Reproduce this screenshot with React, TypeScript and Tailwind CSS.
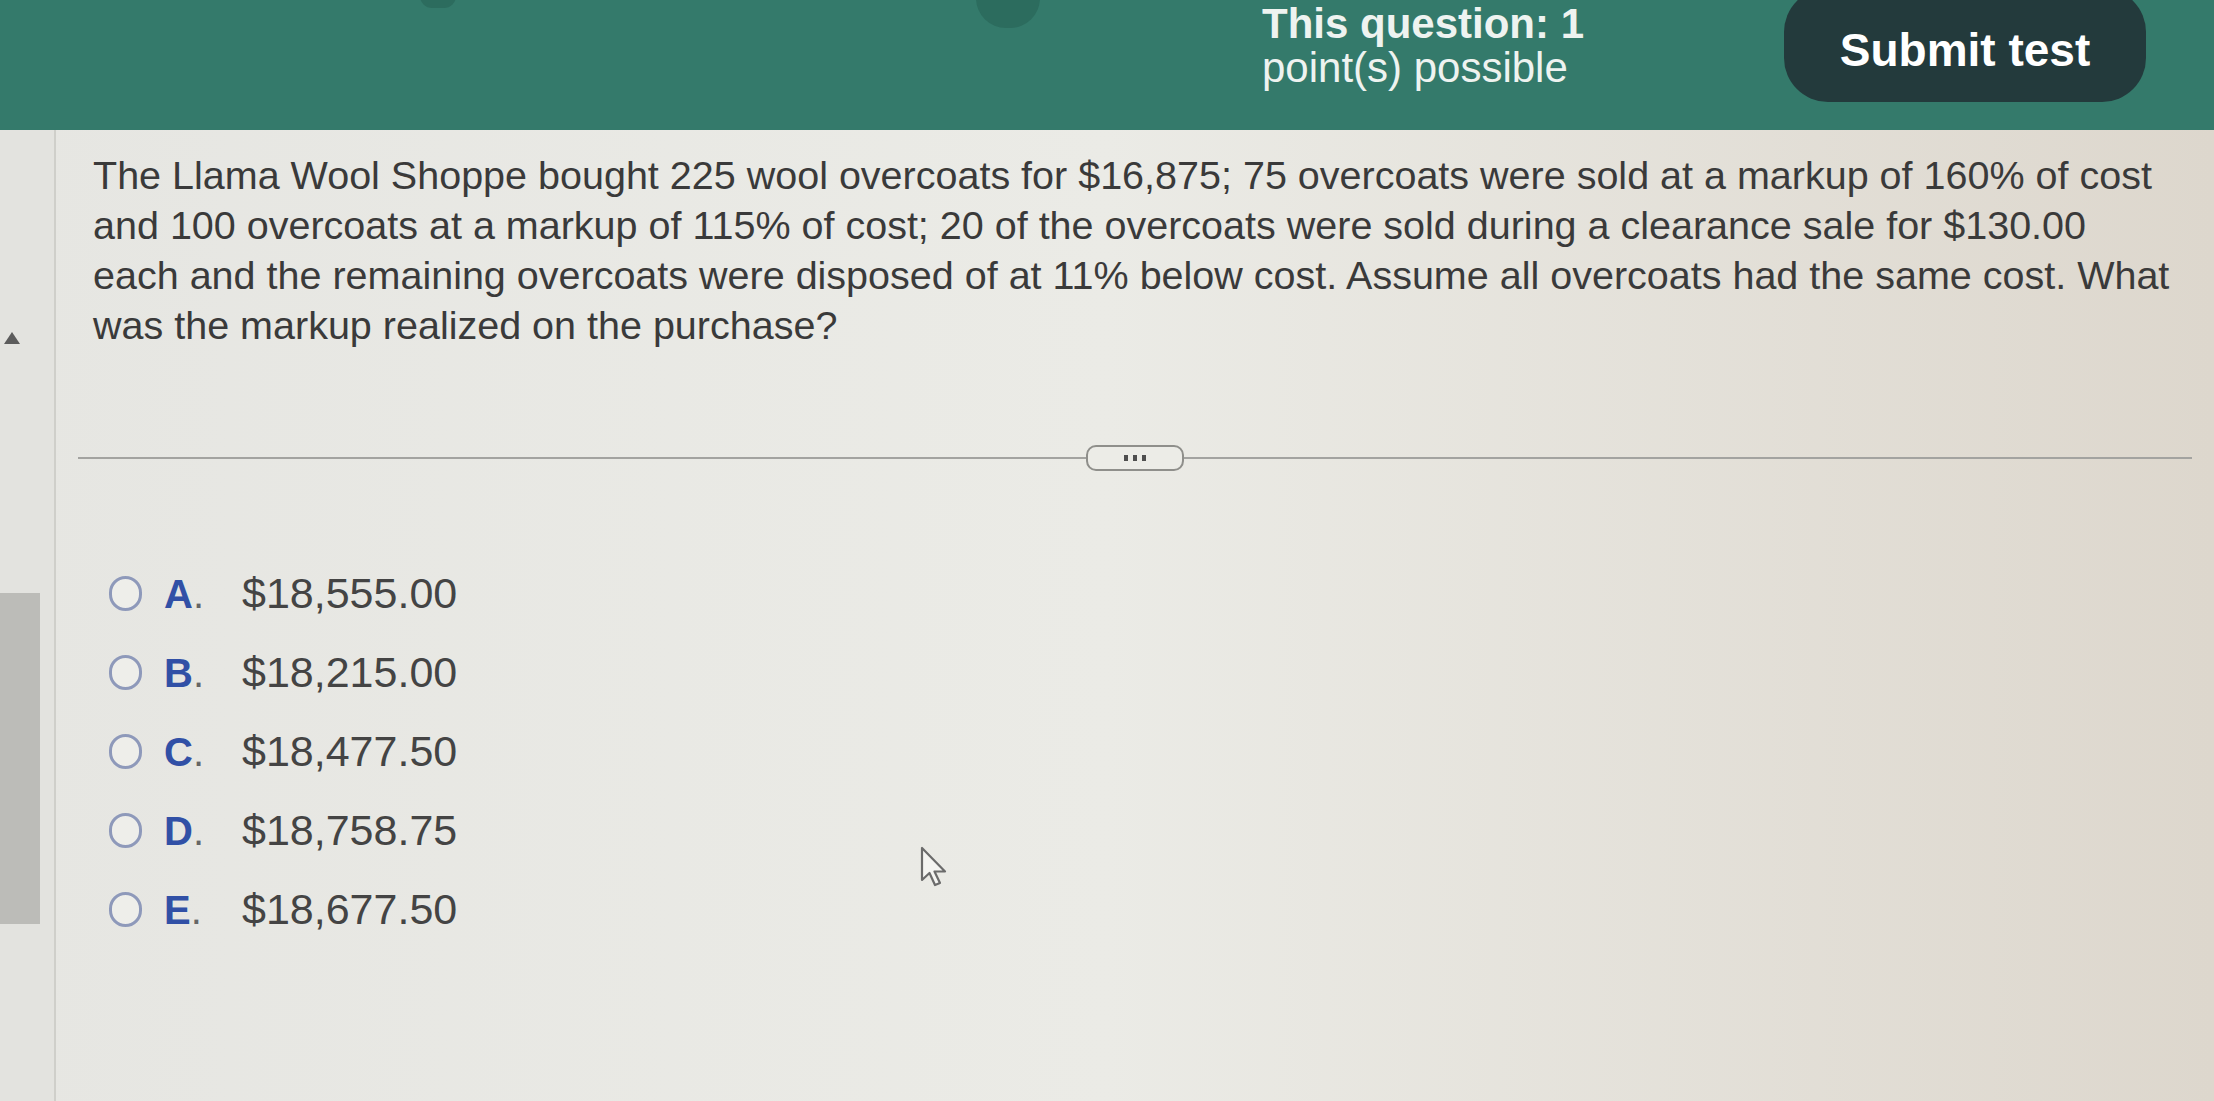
import React from "react";

const questionLines = [
  "The Llama Wool Shoppe bought 225 wool overcoats for $16,875; 75 overcoats were sold at a markup of 160% of cost",
  "and 100 overcoats at a markup of 115% of cost; 20 of the overcoats were sold during a clearance sale for $130.00",
  "each and the remaining overcoats were disposed of at 11% below cost. Assume all overcoats had the same cost. What",
  "was the markup realized on the purchase?",
];

const options = [
  { letter: "A", value: "$18,555.00" },
  { letter: "B", value: "$18,215.00" },
  { letter: "C", value: "$18,477.50" },
  { letter: "D", value: "$18,758.75" },
  { letter: "E", value: "$18,677.50" },
];

const Cursor = () => (
  <svg width="30" height="44" viewBox="0 0 30 44" className="absolute left-[920px] top-[846px]">
    <path
      d="M2 2 L2 34 L9.5 27 L15 39 L20 37 L14.5 25.5 L25 25.5 Z"
      fill="#f4f4f1"
      stroke="#6b6b6b"
      strokeWidth="2.2"
      strokeLinejoin="round"
    />
  </svg>
);

const App = () => {
  return (
    <div
      className="relative w-[2214px] h-[1101px] overflow-hidden bg-gradient-to-r from-[#e6e6e2] via-[#ebebe6] to-[#ddd7cd]"
      style={{ fontFamily: '"Liberation Sans", Arial, sans-serif' }}
    >
      {/* HEADER */}
      <header className="h-[130px] bg-[#347a6b] flex items-start">
        <div className="w-[420px]" />
        <div className="w-[36px] h-[12px] -mt-[4px] rounded-b-full bg-[#2c6c5e]" />
        <div className="w-[520px]" />
        <div className="w-[64px] h-[30px] -mt-[2px] rounded-b-full bg-[#2c6c5e]" />
        <div className="w-[222px]" />
        <div className="pt-[2px] text-[#eef3f0] text-[42px] leading-[44px]">
          <div className="font-bold">This question: 1</div>
          <div>point(s) possible</div>
        </div>
        <div className="w-[200px]" />
        <button className="-mt-[12px] h-[114px] w-[362px] rounded-[44px] bg-[#233a3c] text-white text-[46px] font-bold pt-[10px]">
          Submit test
        </button>
      </header>

      <div className="flex h-[971px]">
        {/* LEFT GUTTER */}
        <div className="w-[56px] border-r-2 border-[#cfcfca] bg-[#e3e3df] flex flex-col">
          <div className="h-[202px]" />
          <div className="ml-[4px] w-0 h-0 border-l-[8px] border-r-[8px] border-b-[12px] border-l-transparent border-r-transparent border-b-[#5c5c5c]" />
          <div className="h-[249px]" />
          <div className="w-[40px] h-[331px] bg-[#bcbcb8]" />
        </div>

        {/* MAIN */}
        <main className="flex-1 pl-[37px] pr-[22px] pt-[20px]">
          <div className="text-[39.5px] leading-[50px] text-[#3a3a3a] whitespace-nowrap">
            {questionLines.map((l) => (
              <div key={l}>{l}</div>
            ))}
          </div>

          <div className="mt-[95px] -ml-[15px] flex items-center">
            <div className="flex-1 h-[2px] bg-[#a3a3a0]" />
            <div className="w-[98px] h-[26px] rounded-[10px] border-2 border-[#8f8f8b] bg-[#ececE7] flex items-center justify-center gap-[5px]">
              <span className="w-[4px] h-[6px] bg-[#4e4e4e]" />
              <span className="w-[4px] h-[6px] bg-[#4e4e4e]" />
              <span className="w-[4px] h-[6px] bg-[#4e4e4e]" />
            </div>
            <div className="flex-1 h-[2px] bg-[#a3a3a0]" />
          </div>

          <div className="mt-[83px] flex flex-col">
            {options.map((o) => (
              <div key={o.letter} className="h-[79px] flex items-center">
                <span className="ml-[16px] w-[33px] h-[35px] rounded-full border-[3px] border-[#8e99ba] bg-[#eeeeea]" />
                <span className="ml-[22px] w-[78px] text-[40px] font-bold text-[#3150a6]">
                  {o.letter}
                  <span className="font-normal text-[#666]">.</span>
                </span>
                <span className="text-[43px] text-[#444]">{o.value}</span>
              </div>
            ))}
          </div>
        </main>
      </div>

      <Cursor />
    </div>
  );
};

export default App;
